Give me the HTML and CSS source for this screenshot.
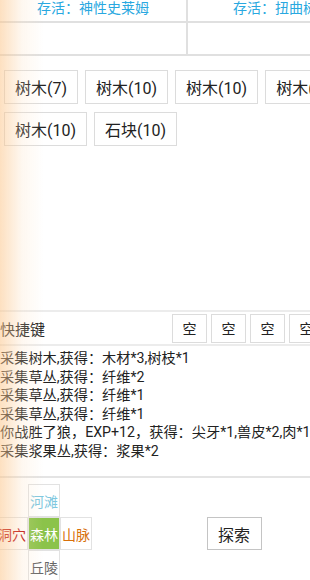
FILE: index.html
```html
<!DOCTYPE html>
<html lang="zh-CN">
<head>
    <meta charset="UTF-8">
    <meta name="viewport" content="width=device-width, initial-scale=1.0">
    <title>探索</title>
    <link rel="stylesheet" href="styles.css">
</head>
<body>

<div class="pagina">
    <div class="tabela">
        <div class="linha linha-topo">
            <div class="celula">存活：神性史莱姆</div>
            <div class="celula">存活：扭曲树精</div>
        </div>
        <div class="linha linha-vazia">
            <div class="celula"></div>
            <div class="celula"></div>
        </div>
    </div>

    <div class="recursos">
        <button class="recurso">树木(7)</button>
        <button class="recurso">树木(10)</button>
        <button class="recurso">树木(10)</button>
        <button class="recurso">树木(10)</button>
        <button class="recurso">树木(10)</button>
        <button class="recurso">石块(10)</button>
    </div>

    <div class="atalhos">
        <span class="atalhos-titulo">快捷键</span>
        <div class="atalhos-botoes">
            <button class="atalho">空</button>
            <button class="atalho">空</button>
            <button class="atalho">空</button>
            <button class="atalho">空</button>
            <button class="atalho">空</button>
        </div>
    </div>

    <div class="registro">
        <div>采集树木,获得：木材*3,树枝*1</div>
        <div>采集草丛,获得：纤维*2</div>
        <div>采集草丛,获得：纤维*1</div>
        <div>采集草丛,获得：纤维*1</div>
        <div>你战胜了狼，EXP+12，获得：尖牙*1,兽皮*2,肉*1</div>
        <div>采集浆果丛,获得：浆果*2</div>
    </div>

    <div class="mapa">
        <div class="direcoes">
            <div class="vazio"></div>
            <div class="local local-praia">河滩</div>
            <div class="vazio"></div>
            <div class="local local-caverna">洞穴</div>
            <div class="local local-floresta">森林</div>
            <div class="local local-montanha">山脉</div>
            <div class="vazio"></div>
            <div class="local local-colina">丘陵</div>
            <div class="vazio"></div>
        </div>
        <div class="explorar">
            <button class="botao-explorar">探索</button>
        </div>
    </div>
</div>

<div class="brilho"></div>

</body>
</html>
```

FILE: styles.css
```css
* {
    box-sizing: border-box;
}

body {
    margin: 0;
    background-color: #fff;
    font-family: Roboto, "Noto Sans CJK SC", sans-serif;
    color: #222;
    overflow: hidden;
}

.pagina {
    width: 376px;
}

.linha {
    display: flex;
    border-bottom: 2px solid #e0e0e0;
}

.celula {
    width: 50%;
    text-align: center;
    font-size: 14px;
    color: #29a8e0;
}

.celula:first-child {
    border-right: 2px solid #e0e0e0;
}

.linha-topo {
    height: 23px;
}

.linha-topo .celula {
    line-height: 16px;
}

.linha-vazia {
    height: 33px;
}

.recursos {
    display: flex;
    flex-wrap: wrap;
    gap: 8px 7px;
    padding: 14px 4px 0 4px;
    height: 254px;
    align-content: flex-start;
}

.recurso {
    height: 34px;
    padding: 0 10px;
    font-family: Roboto, "Noto Sans CJK SC", sans-serif;
    font-size: 16px;
    color: #222;
    background-color: #fff;
    border: 1px solid #dcdcdc;
}

.atalhos {
    display: flex;
    align-items: center;
    height: 36px;
    border-top: 2px solid #ececec;
    border-bottom: 2px solid #ececec;
    padding-right: 13px;
}

.atalhos-titulo {
    font-size: 15px;
}

.atalhos-botoes {
    margin-left: auto;
    display: flex;
    gap: 4px;
}

.atalho {
    width: 35px;
    height: 29px;
    padding: 0;
    font-family: Roboto, "Noto Sans CJK SC", sans-serif;
    font-size: 14px;
    color: #222;
    background-color: #fff;
    border: 1px solid #dcdcdc;
}

.registro {
    height: 132px;
    padding-top: 3px;
    font-size: 14.2px;
    line-height: 18.6px;
    white-space: nowrap;
    border-bottom: 2px solid #e4e4e4;
}

.mapa {
    display: flex;
    padding-top: 6px;
}

.direcoes {
    display: grid;
    grid-template-columns: repeat(3, 32px);
    grid-auto-rows: 33px;
    margin-left: -4px;
}

.local {
    display: flex;
    align-items: center;
    justify-content: center;
    font-size: 14px;
    border: 1px solid #e2e2e2;
    background-color: #fff;
}

.local-praia {
    color: #7fc8e0;
}

.local-caverna {
    color: #b80000;
}

.local-floresta {
    color: #fff;
    background-color: #8bc34a;
}

.local-montanha {
    color: #d8700a;
}

.local-colina {
    color: #666;
}

.explorar {
    flex: 1;
    display: flex;
    justify-content: center;
    padding-top: 33px;
}

.botao-explorar {
    width: 55px;
    height: 33px;
    padding: 0;
    font-family: Roboto, "Noto Sans CJK SC", sans-serif;
    font-size: 16px;
    color: #222;
    background-color: #fff;
    border: 1px solid #c4c4c4;
}

.brilho {
    position: fixed;
    top: 0;
    left: 0;
    bottom: 0;
    width: 44px;
    pointer-events: none;
    background: linear-gradient(to right, rgba(251, 198, 140, 0.55), rgba(253, 222, 188, 0.22) 50%, rgba(255, 255, 255, 0));
}
```
